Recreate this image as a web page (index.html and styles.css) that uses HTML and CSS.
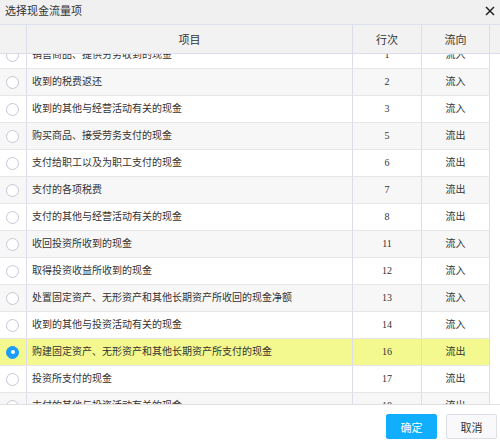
FILE: index.html
```html
<!DOCTYPE html>
<html>
<head>
<meta charset="utf-8">
<link rel="stylesheet" href="styles.css">
</head>
<body>
<div class="dialog">
  <div class="titlebar">
    <span class="title">选择现金流量项</span>
    <svg class="close" width="10" height="10" viewBox="0 0 10 10"><path d="M1 1L9 9M9 1L1 9" stroke="#222" stroke-width="1.5" fill="none"/></svg>
  </div>
  <div class="head">
    <div class="cell c0"></div>
    <div class="cell c1">项目</div>
    <div class="cell c2">行次</div>
    <div class="cell c3">流向</div>
  </div>
  <div class="body">
    <div class="rows">
      <div class="row"><div class="cell c0"><span class="radio"></span></div><div class="cell c1 txt">销售商品、提供劳务收到的现金</div><div class="cell c2 num">1</div><div class="cell c3">流入</div></div>
      <div class="row alt"><div class="cell c0"><span class="radio"></span></div><div class="cell c1 txt">收到的税费返还</div><div class="cell c2 num">2</div><div class="cell c3">流入</div></div>
      <div class="row"><div class="cell c0"><span class="radio"></span></div><div class="cell c1 txt">收到的其他与经营活动有关的现金</div><div class="cell c2 num">3</div><div class="cell c3">流入</div></div>
      <div class="row alt"><div class="cell c0"><span class="radio"></span></div><div class="cell c1 txt">购买商品、接受劳务支付的现金</div><div class="cell c2 num">5</div><div class="cell c3">流出</div></div>
      <div class="row"><div class="cell c0"><span class="radio"></span></div><div class="cell c1 txt">支付给职工以及为职工支付的现金</div><div class="cell c2 num">6</div><div class="cell c3">流出</div></div>
      <div class="row alt"><div class="cell c0"><span class="radio"></span></div><div class="cell c1 txt">支付的各项税费</div><div class="cell c2 num">7</div><div class="cell c3">流出</div></div>
      <div class="row"><div class="cell c0"><span class="radio"></span></div><div class="cell c1 txt">支付的其他与经营活动有关的现金</div><div class="cell c2 num">8</div><div class="cell c3">流出</div></div>
      <div class="row alt"><div class="cell c0"><span class="radio"></span></div><div class="cell c1 txt">收回投资所收到的现金</div><div class="cell c2 num">11</div><div class="cell c3">流入</div></div>
      <div class="row"><div class="cell c0"><span class="radio"></span></div><div class="cell c1 txt">取得投资收益所收到的现金</div><div class="cell c2 num">12</div><div class="cell c3">流入</div></div>
      <div class="row alt"><div class="cell c0"><span class="radio"></span></div><div class="cell c1 txt">处置固定资产、无形资产和其他长期资产所收回的现金净额</div><div class="cell c2 num">13</div><div class="cell c3">流入</div></div>
      <div class="row"><div class="cell c0"><span class="radio"></span></div><div class="cell c1 txt">收到的其他与投资活动有关的现金</div><div class="cell c2 num">14</div><div class="cell c3">流入</div></div>
      <div class="row selected"><div class="cell c0"><span class="radio checked"></span></div><div class="cell c1 txt">购建固定资产、无形资产和其他长期资产所支付的现金</div><div class="cell c2 num">16</div><div class="cell c3">流出</div></div>
      <div class="row"><div class="cell c0"><span class="radio"></span></div><div class="cell c1 txt">投资所支付的现金</div><div class="cell c2 num">17</div><div class="cell c3">流出</div></div>
      <div class="row alt"><div class="cell c0"><span class="radio"></span></div><div class="cell c1 txt">支付的其他与投资活动有关的现金</div><div class="cell c2 num">18</div><div class="cell c3">流出</div></div>
    </div>
  </div>
  <div class="footer">
    <button class="btn primary">确定</button>
    <button class="btn">取消</button>
  </div>
</div>
</body>
</html>
```

FILE: styles.css
```css
* { box-sizing: border-box; }
html, body { margin: 0; padding: 0; background: #fff; }
body {
  font-family: "Liberation Serif", "Noto Sans CJK SC", serif;
  color: #333;
  width: 500px;
  height: 441px;
  overflow: hidden;
}
.dialog { width: 500px; height: 441px; display: flex; flex-direction: column; }
.titlebar {
  height: 25px;
  flex: none;
  background: #f0f0f0;
  border-bottom: 1px solid #dde0ee;
  display: flex;
  align-items: flex-start;
  justify-content: space-between;
  padding: 3px 4px 0 5px;
}
.title { font-size: 11px; line-height: 15px; color: #333; font-family: "Noto Sans CJK SC", sans-serif; }
.close { margin-top: 3px; margin-right: 1px; }
.head {
  height: 29px;
  flex: none;
  background: #f2f2f2;
  border-bottom: 1px solid #dcdcec;
  display: grid;
  grid-template-columns: 27px 326px 69px 68px;
  font-size: 11px;
}
.cell {
  border-right: 1px solid #dcdcec;
  display: flex;
  align-items: center;
  justify-content: center;
}
.head .cell { color: #333; }
.body {
  height: 351px;
  flex: none;
  overflow: hidden;
  border-bottom: 1px solid #e0e0e0;
  background: #fff;
}
.rows { margin-top: -12px; width: 490px; }
.row {
  display: grid;
  grid-template-columns: 27px 326px 69px 68px;
  height: 27px;
  border-bottom: 1px solid #e6e6e6;
  font-size: 10px;
  background: #fff;
}
.row.alt { background: #f7f7f7; }
.row.selected { background: #f3f98e; }
.row .cell { line-height: 26px; }
.txt { justify-content: flex-start; padding-left: 5px; white-space: nowrap; }
.num { font-family: "Liberation Serif", serif; font-size: 10px; }
.radio {
  width: 13px;
  height: 13px;
  border-radius: 50%;
  border: 1px solid #c4c8d6;
  background: #fff;
  margin-left: -1px;
  display: flex;
  align-items: center;
  justify-content: center;
}
.radio.checked { background: #1a9dfb; border-color: #1a9dfb; }
.radio.checked::after {
  content: "";
  width: 4px;
  height: 4px;
  border-radius: 50%;
  background: #fff;
}
.footer {
  flex: 1;
  display: flex;
  justify-content: flex-end;
  align-items: flex-start;
  padding: 9px 3px 0 0;
  gap: 9px;
}
.btn {
  width: 51px;
  height: 25px;
  font-family: "Noto Sans CJK SC", sans-serif;
  font-size: 11px;
  border: 1px solid #dcdfe6;
  background: #f9f9fb;
  color: #333;
  border-radius: 2px;
  padding: 0;
}
.btn.primary { background: #11aefe; border-color: #11aefe; color: #fff; }
```
